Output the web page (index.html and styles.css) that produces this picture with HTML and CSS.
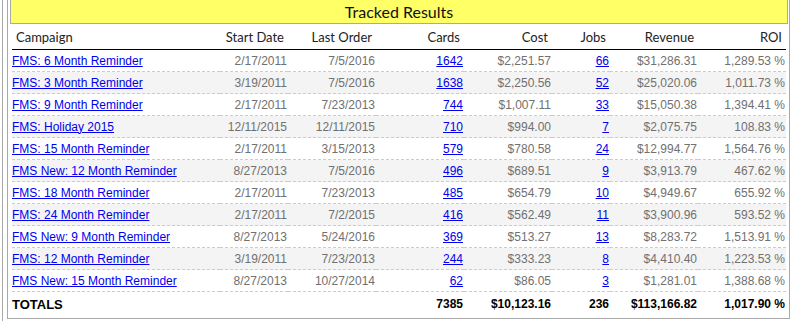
FILE: index.html
```html
<!DOCTYPE html>
<html>
<head>
<meta charset="utf-8">
<link rel="stylesheet" href="styles.css">
</head>
<body>
<div class="frame">
  <div class="panel">
    <div class="title">Tracked Results</div>
    <table class="results">
      <colgroup>
        <col class="c-camp"><col class="c-date"><col class="c-last"><col class="c-num"><col class="c-num"><col class="c-jobs"><col class="c-num"><col class="c-num">
      </colgroup>
      <thead>
        <tr>
          <th class="left">Campaign</th>
          <th>Start Date</th>
          <th>Last Order</th>
          <th>Cards</th>
          <th>Cost</th>
          <th>Jobs</th>
          <th>Revenue</th>
          <th>ROI</th>
        </tr>
      </thead>
      <tbody>
        <tr><td class="left"><a href="#">FMS: 6 Month Reminder</a></td><td>2/17/2011</td><td>7/5/2016</td><td><a href="#">1642</a></td><td>$2,251.57</td><td><a href="#">66</a></td><td>$31,286.31</td><td>1,289.53 %</td></tr>
        <tr><td class="left"><a href="#">FMS: 3 Month Reminder</a></td><td>3/19/2011</td><td>7/5/2016</td><td><a href="#">1638</a></td><td>$2,250.56</td><td><a href="#">52</a></td><td>$25,020.06</td><td>1,011.73 %</td></tr>
        <tr><td class="left"><a href="#">FMS: 9 Month Reminder</a></td><td>2/17/2011</td><td>7/23/2013</td><td><a href="#">744</a></td><td>$1,007.11</td><td><a href="#">33</a></td><td>$15,050.38</td><td>1,394.41 %</td></tr>
        <tr><td class="left"><a href="#">FMS: Holiday 2015</a></td><td>12/11/2015</td><td>12/11/2015</td><td><a href="#">710</a></td><td>$994.00</td><td><a href="#">7</a></td><td>$2,075.75</td><td>108.83 %</td></tr>
        <tr><td class="left"><a href="#">FMS: 15 Month Reminder</a></td><td>2/17/2011</td><td>3/15/2013</td><td><a href="#">579</a></td><td>$780.58</td><td><a href="#">24</a></td><td>$12,994.77</td><td>1,564.76 %</td></tr>
        <tr><td class="left"><a href="#">FMS New: 12 Month Reminder</a></td><td>8/27/2013</td><td>7/5/2016</td><td><a href="#">496</a></td><td>$689.51</td><td><a href="#">9</a></td><td>$3,913.79</td><td>467.62 %</td></tr>
        <tr><td class="left"><a href="#">FMS: 18 Month Reminder</a></td><td>2/17/2011</td><td>7/23/2013</td><td><a href="#">485</a></td><td>$654.79</td><td><a href="#">10</a></td><td>$4,949.67</td><td>655.92 %</td></tr>
        <tr><td class="left"><a href="#">FMS: 24 Month Reminder</a></td><td>2/17/2011</td><td>7/2/2015</td><td><a href="#">416</a></td><td>$562.49</td><td><a href="#">11</a></td><td>$3,900.96</td><td>593.52 %</td></tr>
        <tr><td class="left"><a href="#">FMS New: 9 Month Reminder</a></td><td>8/27/2013</td><td>5/24/2016</td><td><a href="#">369</a></td><td>$513.27</td><td><a href="#">13</a></td><td>$8,283.72</td><td>1,513.91 %</td></tr>
        <tr><td class="left"><a href="#">FMS: 12 Month Reminder</a></td><td>3/19/2011</td><td>7/23/2013</td><td><a href="#">244</a></td><td>$333.23</td><td><a href="#">8</a></td><td>$4,410.40</td><td>1,223.53 %</td></tr>
        <tr><td class="left"><a href="#">FMS New: 15 Month Reminder</a></td><td>8/27/2013</td><td>10/27/2014</td><td><a href="#">62</a></td><td>$86.05</td><td><a href="#">3</a></td><td>$1,281.01</td><td>1,388.68 %</td></tr>
      </tbody>
      <tfoot>
        <tr><th class="left totals">TOTALS</th><td></td><td></td><td>7385</td><td>$10,123.16</td><td>236</td><td>$113,166.82</td><td>1,017.90 %</td></tr>
      </tfoot>
    </table>
  </div>
</div>
</body>
</html>
```

FILE: styles.css
```css
html, body {
  margin: 0;
  padding: 0;
  background: #ffffff;
}

.frame {
  margin-left: 2px;
  border-left: 1px solid #a9a9a9;
  padding-left: 4px;
  height: 321px;
  box-sizing: border-box;
}

.panel {
  width: 783px;
  box-sizing: border-box;
  border: 1px solid #a9a9a9;
  border-top: none;
  padding: 0 1px 4px 2px;
  height: 319px;
}

.title {
  height: 23px;
  line-height: 23px;
  background: #ffff66;
  border: 1px solid #a9a9a9;
  border-top: none;
  text-align: center;
  font-family: Lato, "Noto Sans", sans-serif;
  font-size: 16px;
  color: #111;
}

.results {
  margin-left: 2px;
  width: 774px;
  table-layout: fixed;
  border-collapse: collapse;
  font-family: "Liberation Sans", Arial, sans-serif;
  font-size: 12px;
}

.c-camp { width: 208px; }
.c-date { width: 68px; }
.c-last { width: 88px; }
.c-num { width: 88px; }
.c-jobs { width: 58px; }

.results th {
  font-family: Lato, "Noto Sans", sans-serif;
  font-weight: normal;
  font-size: 13px;
  color: #222;
  text-align: right;
  padding: 1px 4px 0 0;
  height: 24px;
  border-bottom: 1px solid #000;
}

.results th.left {
  text-align: left;
  padding-left: 4px;
}

.results td {
  color: #707070;
  text-align: right;
  padding: 0 1px 0 0;
  height: 21px;
  border-bottom: 1px dashed #cccccc;
  white-space: nowrap;
}

.results td.left {
  text-align: left;
  padding: 0;
}

.results a {
  color: #0000ee;
  text-decoration: underline;
}

.results tbody tr:nth-child(even) td {
  background: #f4f4f4;
}

.results tfoot td,
.results tfoot th {
  border-bottom: none;
  height: 22px;
  color: #000;
  font-weight: bold;
}

.results tfoot td {
  font-family: "Liberation Sans", Arial, sans-serif;
  font-size: 12px;
}

.results tfoot th.totals {
  font-family: "Liberation Sans", Arial, sans-serif;
  font-size: 13px;
  padding-left: 0;
}
```
